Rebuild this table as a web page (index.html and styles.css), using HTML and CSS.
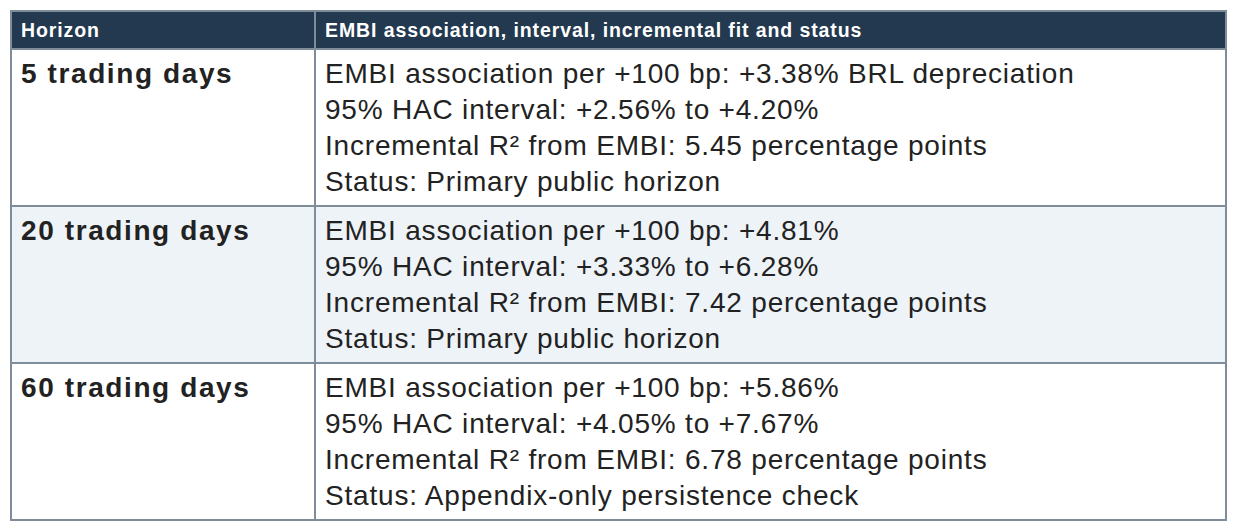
FILE: index.html
```html
<!DOCTYPE html>
<html>
<head>
<meta charset="utf-8">
<link rel="stylesheet" href="styles.css">
</head>
<body>
<table class="tbl">
  <thead>
    <tr><th class="c1">Horizon</th><th class="c2">EMBI association, interval, incremental fit and status</th></tr>
  </thead>
  <tbody>
    <tr>
      <td class="h">5 trading days</td>
      <td class="d"><div>EMBI association per +100 bp: +3.38% BRL depreciation</div><div>95% HAC interval: +2.56% to +4.20%</div><div>Incremental R² from EMBI: 5.45 percentage points</div><div>Status: Primary public horizon</div></td>
    </tr>
    <tr class="alt">
      <td class="h">20 trading days</td>
      <td class="d"><div>EMBI association per +100 bp: +4.81%</div><div>95% HAC interval: +3.33% to +6.28%</div><div>Incremental R² from EMBI: 7.42 percentage points</div><div>Status: Primary public horizon</div></td>
    </tr>
    <tr>
      <td class="h">60 trading days</td>
      <td class="d"><div>EMBI association per +100 bp: +5.86%</div><div>95% HAC interval: +4.05% to +7.67%</div><div>Incremental R² from EMBI: 6.78 percentage points</div><div>Status: Appendix-only persistence check</div></td>
    </tr>
  </tbody>
</table>
</body>
</html>
```
FILE: styles.css
```css
html, body { margin: 0; padding: 0; background: #fff; }
body { padding: 10px; font-family: "Liberation Sans", Arial, sans-serif; color: #222; }
.tbl { border-collapse: collapse; width: 1217px; }
.tbl th, .tbl td { border: 2px solid #7f8c99; text-align: left; vertical-align: top; }
.tbl th { background: #223950; color: #fff; font-size: 19.5px; letter-spacing: 0.9px; font-weight: bold; height: 38px; padding: 0 9px; vertical-align: middle; box-sizing: border-box; }
.c1 { width: 304px; box-sizing: border-box; }
.tbl td { padding: 6px 9px 5px; font-size: 28px; letter-spacing: 0.8px; line-height: 36px; }
.tbl td.h { font-weight: bold; letter-spacing: 1.6px; }
.tbl tr.alt td { background: #eef3f8; }
```
